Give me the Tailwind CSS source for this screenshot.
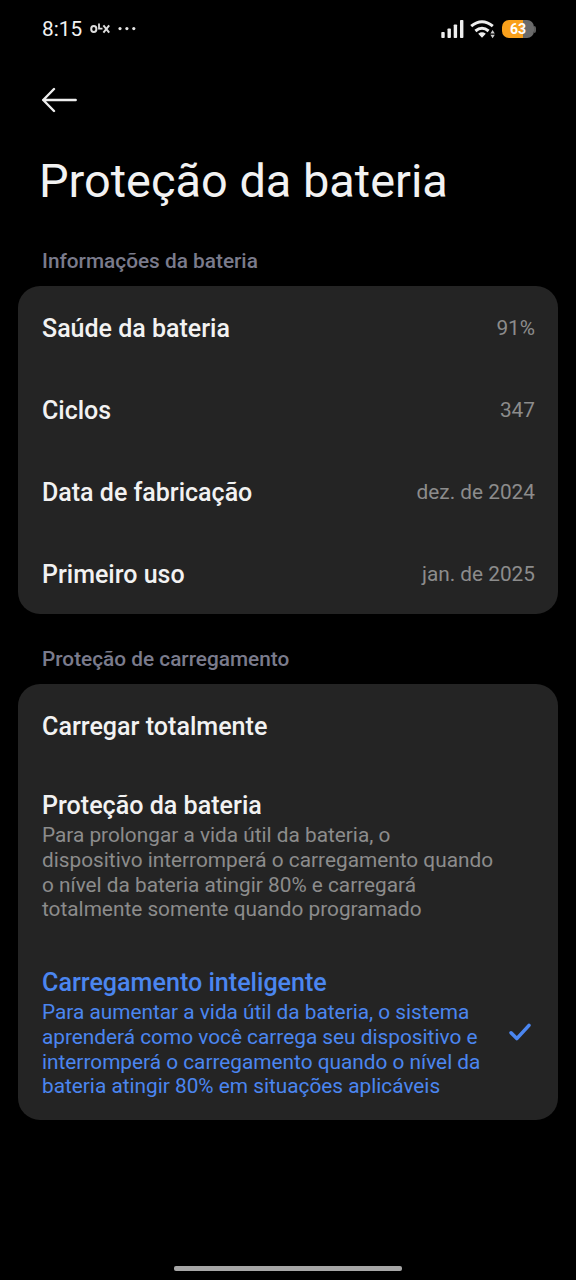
<!DOCTYPE html>
<html lang="pt-BR"><head><meta charset="utf-8"><title>Proteção da bateria</title>
<script src="https://cdn.jsdelivr.net/npm/@tailwindcss/browser@4"></script></head>
<body class="bg-black text-[#f2f2f2] font-['Roboto',sans-serif]">
<div class="w-[576px] h-[1280px] flex flex-col overflow-hidden">
<header class="h-[58px] pl-[42px] pr-10 flex items-center justify-between">
<div class="flex items-center text-[20.8px]"><span class="w-12 pt-[2px]">8:15</span>
<svg class="w-[21px] h-4" viewBox="0 0 21 16" fill="none" stroke="#ddd" stroke-width="2"><ellipse cx="3.8" cy="8" rx="2.6" ry="3"/><path d="M9 2.5v5.2h3.5" stroke-width="1.8"/><path d="m13.4 4.4 5.8 7.2M19.2 4.4l-5.8 7.2"/></svg>
<svg class="ml-[6px] w-5 h-4" viewBox="0 0 20 16" fill="#e4e4e4"><circle cx="3" cy="7.6" r="1.6"/><circle cx="9.9" cy="7.6" r="1.6"/><circle cx="16.8" cy="7.6" r="1.6"/></svg></div>
<div class="flex items-center">
<svg class="w-[23px] h-5" viewBox="0 0 23 20" fill="#eee"><rect x=".3" y="13" width="3.4" height="6" rx=".8"/><rect x="6.5" y="9.5" width="3.4" height="9.5" rx=".8"/><rect x="12.7" y="5.5" width="3.4" height="13.5" rx=".8"/><rect x="19" y="1" width="3.4" height="18" rx=".8"/></svg>
<svg class="ml-[6px] w-[26px] h-5" viewBox="0 0 26 20" fill="none" stroke="#eee" stroke-width="3"><path d="M1.2 7.2Q12-1.8 22.8 7.2M5.4 12q6.6-5.4 13.2 0"/><path d="m8.2 14.7 3.8 4 3.8-4q-3.8-2.8-7.6 0" fill="#eee" stroke="none"/><path d="m22.6 11 2.2 3.4h-4.4zM22.6 19.2l-2.2-3.4h4.4z" fill="#ccc" stroke="none"/></svg>
<div class="ml-[6px] w-8 h-[18px] rounded-[7px] overflow-hidden bg-linear-to-r from-[#f9a01b] from-66% to-[#6a6a6a] to-66% text-[14px] font-bold text-white flex items-center justify-center"><span class="leading-none">63</span></div>
<div class="w-[2px] h-[7px] rounded-r-full bg-[#5c5c5c]"></div></div>
</header>
<div class="h-[84px] px-[42px] flex items-center"><svg class="w-9 h-7" viewBox="0 0 36 28" fill="none" stroke="#eee" stroke-width="2.4" stroke-linecap="round" stroke-linejoin="round"><path d="M1.2 14h32.5M12 3 1.2 14 12 25"/></svg></div>
<h1 class="h-[78px] flex items-center pl-[39px] text-[46.9px] whitespace-nowrap">Proteção da bateria</h1>
<h2 class="h-[66px] pt-[29px] pl-[42px] text-[20.8px] leading-6 font-medium text-[#7a7b8c]">Informações da bateria</h2>
<section class="mx-[18px] h-[328px] rounded-[22px] bg-[#242424] pl-6 pr-[23px] pt-[2px] text-[25px] font-medium">
<div class="h-[82px] flex items-center justify-between"><span>Saúde da bateria</span><span class="text-[20.8px] font-normal text-[#8c8c8c]">91%</span></div>
<div class="h-[82px] flex items-center justify-between"><span>Ciclos</span><span class="text-[20.8px] font-normal text-[#8c8c8c]">347</span></div>
<div class="h-[82px] flex items-center justify-between"><span>Data de fabricação</span><span class="text-[20.8px] font-normal text-[#8c8c8c]">dez. de 2024</span></div>
<div class="h-[82px] flex items-center justify-between"><span>Primeiro uso</span><span class="text-[20.8px] font-normal text-[#8c8c8c]">jan. de 2025</span></div>
</section>
<h2 class="h-[70px] pt-[33px] pl-[42px] text-[20.8px] leading-6 font-medium text-[#7a7b8c]">Proteção de carregamento</h2>
<section class="mx-[18px] h-[436px] rounded-[22px] bg-[#242424] px-6">
<div class="h-[107px] pt-[28px] text-[25.1px] leading-[30px] font-medium">Carregar totalmente</div>
<div class="h-[177px]"><h3 class="text-[25.1px] leading-[30px] font-medium">Proteção da bateria</h3><p class="pt-[2.4px] text-[20.8px] leading-[24.6px] text-[#8c8c8c] whitespace-nowrap">Para prolongar a vida útil da bateria, o<br>dispositivo interromperá o carregamento quando<br>o nível da bateria atingir 80% e carregará<br>totalmente somente quando programado</p></div>
<div class="flex justify-between text-[#4b86f0]"><div><h3 class="text-[25.1px] leading-[30px] font-medium">Carregamento inteligente</h3><p class="pt-[2.4px] text-[20.8px] leading-[24.6px] whitespace-nowrap">Para aumentar a vida útil da bateria, o sistema<br>aprenderá como você carrega seu dispositivo e<br>interromperá o carregamento quando o nível da<br>bateria atingir 80% em situações aplicáveis</p></div>
<svg class="mt-[54px] mr-[2px] w-6 h-5" viewBox="0 0 24 20" fill="none" stroke="#4b86f0" stroke-width="3.6" stroke-linecap="round" stroke-linejoin="round"><path d="m3 10.8 5.8 5.8L21 3.4"/></svg></div>
</section>
<footer class="flex-1 flex items-end justify-center pb-[9px]"><div class="w-[228px] h-[5px] rounded-[2px] bg-[#a6a6a6]"></div></footer>
</div></body></html>
